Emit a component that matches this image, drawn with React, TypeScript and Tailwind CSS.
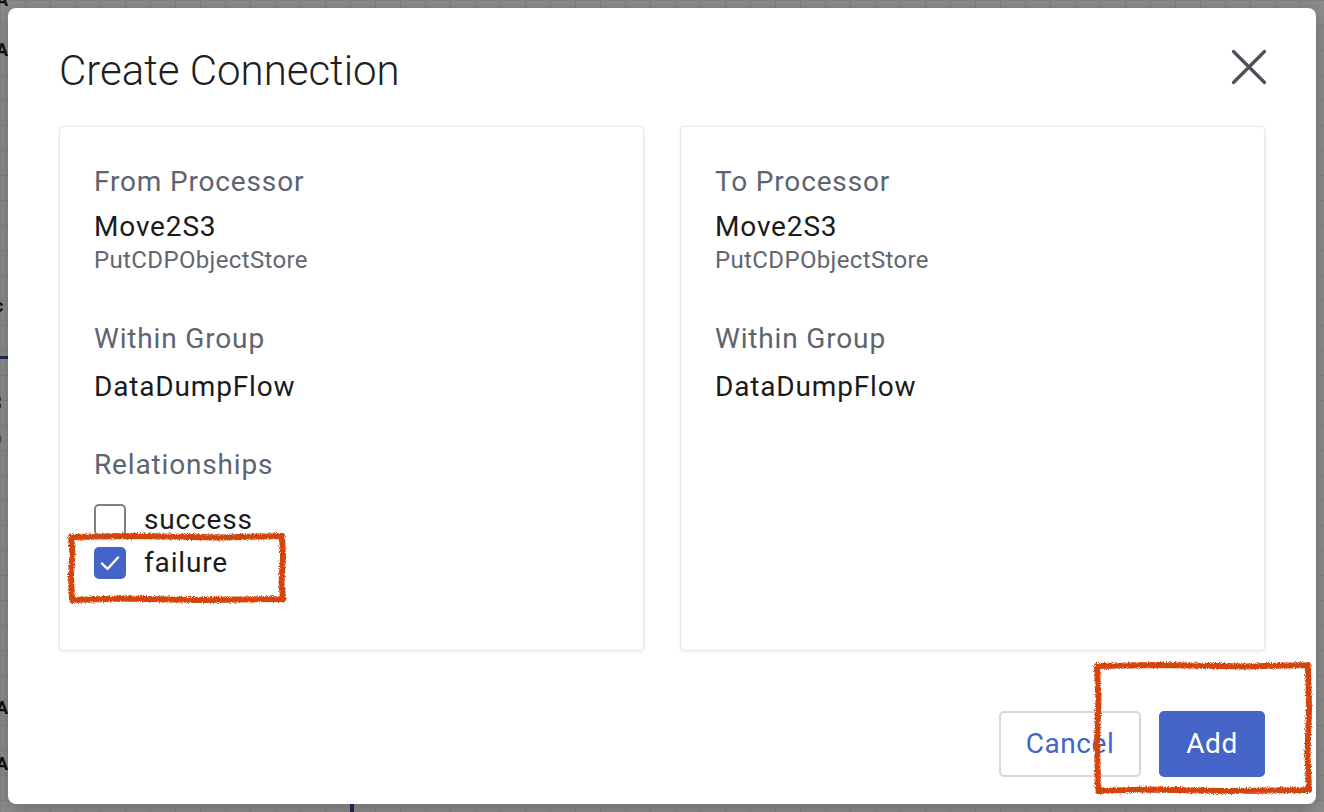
import { useState } from "react";

const labelCls = "text-[28px] leading-[32px] tracking-[0.03em] text-[#5d6470]";
const valueCls = "text-[28px] leading-[32px] tracking-[0.03em] text-[#1b1b1b]";

interface Side {
	title: string;
	name: string;
	type: string;
	group: string;
}

const sides: Side[] = [
	{ title: "From Processor", name: "Move2S3", type: "PutCDPObjectStore", group: "DataDumpFlow" },
	{ title: "To Processor", name: "Move2S3", type: "PutCDPObjectStore", group: "DataDumpFlow" },
];

// rough, hand drawn looking rectangle used for the red markup
const Scribble = ({ w, h, id }: { w: number; h: number; id: string }) => (
	<svg width={w} height={h} viewBox={`0 0 ${w} ${h}`} fill="none">
		<defs>
			<filter id={id}>
				<feTurbulence type="fractalNoise" baseFrequency="0.9" numOctaves="2" seed="3" />
				<feDisplacementMap in="SourceGraphic" scale="4" />
			</filter>
		</defs>
		<path
			d={`M5 6 L${w * 0.3} 5 L${w * 0.7} 6.5 L${w - 6} 5 L${w - 5} ${h * 0.35} L${w - 6.5} ${h * 0.7} L${w - 5} ${h - 6} L${w * 0.6} ${h - 5} L${w * 0.25} ${h - 6.5} L6 ${h - 5} L5 ${h * 0.6} L6.5 ${h * 0.3} Z`}
			stroke="#d4450f"
			strokeWidth="6"
			strokeLinejoin="round"
			filter={`url(#${id})`}
		/>
	</svg>
);

const Check = ({ checked, onClick }: { checked: boolean; onClick: () => void }) => (
	<span
		onClick={onClick}
		className={`flex h-[32px] w-[32px] shrink-0 cursor-pointer items-center justify-center rounded-[5px] ${
			checked ? "bg-[#4464c8]" : "border-2 border-[#7b8089] bg-white"
		}`}
	>
		{checked && (
			<svg width="22" height="22" viewBox="0 0 22 22" fill="none">
				<path d="M3 11.5 L8.5 17 L19 5.5" stroke="white" strokeWidth="2.4" strokeLinecap="round" strokeLinejoin="round" />
			</svg>
		)}
	</span>
);

const App = () => {
	const [rels, setRels] = useState<Record<string, boolean>>({ success: false, failure: true });

	return (
		<div
			className="relative h-[812px] w-full overflow-hidden bg-[#8d8d8d] bg-[linear-gradient(#838383_1px,transparent_1px),linear-gradient(90deg,#838383_1px,transparent_1px)] bg-[size:25px_25px] p-2"
			style={{ fontFamily: "Roboto, 'Noto Sans', sans-serif" }}
		>
			{/* bits of the canvas peeking out behind the dialog */}
			<span className="absolute left-[-4px] top-[-14px] text-[18px] font-bold text-[#111]">A</span>
			<span className="absolute left-[-4px] top-[36px] text-[18px] font-bold text-[#111]">A</span>
			<span className="absolute left-[-6px] top-[292px] text-[18px] font-bold text-[#111]">c</span>
			<div className="absolute left-0 top-[356px] h-[3px] w-[8px] bg-[#1c2a5a]" />
			<span className="absolute left-[-9px] top-[388px] text-[20px] text-[#222]">3</span>
			<span className="absolute left-[-6px] top-[428px] text-[14px] text-[#444]">p</span>
			<span className="absolute left-[-4px] top-[694px] text-[18px] font-bold text-[#111]">A</span>
			<span className="absolute left-[-4px] top-[750px] text-[18px] font-bold text-[#111]">A</span>
			<div className="absolute bottom-0 left-[350px] h-[12px] w-[4px] bg-[#1c2a5a]" />

			<div className="relative z-10 flex h-full flex-col rounded-lg bg-white px-[51px] pt-[39px] shadow-[0_4px_20px_rgba(0,0,0,0.25)]">
				<div className="flex items-start justify-between">
					<h1 className="text-[42px] font-light leading-[48px] text-[#1f1f1f]">Create Connection</h1>
					<button className="mr-[-2px] mt-[2px] text-[#4b5059]">
						<svg width="36" height="36" viewBox="0 0 36 36" fill="none">
							<path d="M2.5 2.5 L33.5 33.5 M33.5 2.5 L2.5 33.5" stroke="currentColor" strokeWidth="3.2" strokeLinecap="round" />
						</svg>
					</button>
				</div>

				<div className="mt-[31px] grid h-[525px] grid-cols-2 gap-[36px]">
					{sides.map((s, i) => (
						<div
							key={s.title}
							className="rounded-[4px] border border-[#e6e7ea] bg-white px-[34px] pt-[39px] shadow-[0_1px_4px_rgba(0,0,0,0.08)]"
						>
							<p className={labelCls}>{s.title}</p>
							<p className={`${valueCls} mt-[13px]`}>{s.name}</p>
							<p className="mt-[3px] text-[24px] leading-[28px] tracking-[0.015em] text-[#62676f]">{s.type}</p>
							<p className={`${labelCls} mt-[49px]`}>Within Group</p>
							<p className={`${valueCls} mt-[16px]`}>{s.group}</p>
							{i === 0 && (
								<>
									<p className={`${labelCls} mt-[46px]`}>Relationships</p>
									<div className="mt-[23px] flex flex-col gap-[11px]">
										{["success", "failure"].map((r) => (
											<label key={r} className="flex items-center gap-[18px]">
												<Check
													checked={rels[r]}
													onClick={() => setRels({ ...rels, [r]: !rels[r] })}
												/>
												<span className={valueCls}>{r}</span>
											</label>
										))}
									</div>
								</>
							)}
						</div>
					))}
				</div>

				<div className="mt-[60px] flex justify-end gap-[18px]">
					<button className="h-[66px] w-[142px] rounded-[5px] border-2 border-[#d5d8dd] bg-white text-[28px] tracking-[0.02em] text-[#4464c8]">
						Cancel
					</button>
					<button className="h-[66px] w-[106px] rounded-[5px] bg-[#4464c8] text-[28px] tracking-[0.02em] text-white">Add</button>
				</div>
			</div>

			{/* red markup drawn over the screenshot */}
			<div className="absolute left-[66px] top-[531px] z-20">
				<Scribble w={222} h={74} id="rough-a" />
			</div>
			<div className="absolute left-[1092px] top-[660px] z-20">
				<Scribble w={222} h={136} id="rough-b" />
			</div>
		</div>
	);
};

export default App;
